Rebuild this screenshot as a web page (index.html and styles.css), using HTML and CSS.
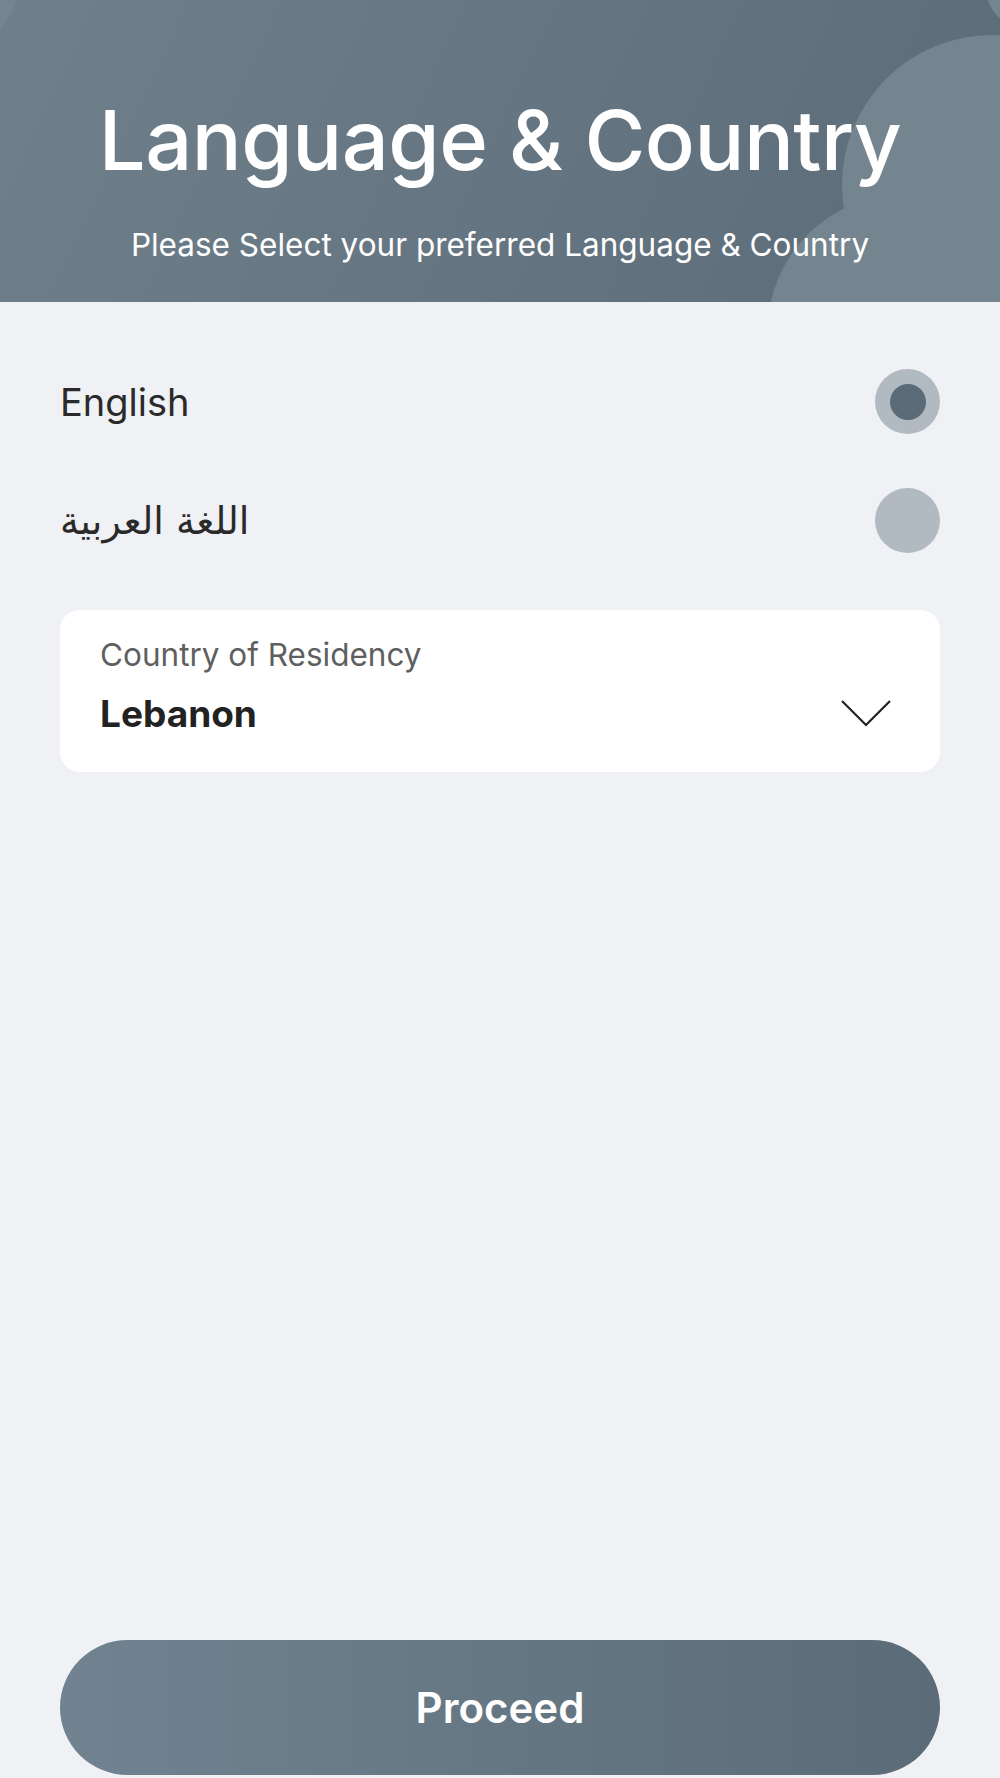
FILE: index.html
```html
<!DOCTYPE html>
<html lang="en">
<head>
  <meta charset="UTF-8">
  <title>Language &amp; Country</title>
  <link rel="stylesheet" href="styles.css">
</head>
<body>
  <div class="page">
    <div class="header">
      <span class="blob blob-a"></span>
      <span class="blob blob-b"></span>
      <span class="blob blob-c"></span>
      <span class="blob blob-d"></span>
      <h1>Language &amp; Country</h1>
      <p>Please Select your preferred Language &amp; Country</p>
    </div>

    <div class="content">
      <div class="option">
        <span class="label">English</span>
        <span class="radio checked"></span>
      </div>
      <div class="option">
        <span class="label arabic">اللغة العربية</span>
        <span class="radio"></span>
      </div>

      <div class="select-card">
        <div class="select-label">Country of Residency</div>
        <div class="select-row">
          <span class="select-value">Lebanon</span>
          <svg class="chevron" width="52" height="30" viewBox="0 0 52 30">
            <polyline points="2,3 26,27 50,3" fill="none" stroke="#222" stroke-width="2.2"/>
          </svg>
        </div>
      </div>
    </div>

    <!-- Bottom button -->
    <div class="footer">
      <button class="proceed">Proceed</button>
    </div>
  </div>
</body>
</html>
```

FILE: styles.css
```css
body {
  margin: 0;
  background-color: #eff1f5;
  font-family: Inter, "Open Sans", sans-serif;
  color: #222;
}

.page {
  display: flex;
  flex-direction: column;
  min-height: 100vh;
}

.header {
  position: relative;
  overflow: hidden;
  height: 302px;
  background: linear-gradient(115deg, #6f808b 0%, #5b6b78 100%);
  color: white;
  text-align: center;
}

.header h1 {
  position: relative;
  margin: 0;
  padding-top: 95px;
  font-size: 83px;
  font-weight: 500;
  line-height: 90px;
  letter-spacing: -0.5px;
}

.header p {
  position: relative;
  margin: 42px 0 0;
  font-size: 31.5px;
  line-height: 36px;
  font-weight: 400;
}

.blob {
  position: absolute;
  border-radius: 50%;
  background-color: #74858f;
}

.blob-a {
  left: 768px;
  top: 195px;
  width: 270px;
  height: 270px;
}

.blob-b {
  left: 842px;
  top: 35px;
  width: 300px;
  height: 300px;
}

.blob-c {
  left: 985px;
  top: -60px;
  width: 90px;
  height: 90px;
}

.blob-d {
  left: -150px;
  top: -110px;
  width: 170px;
  height: 170px;
}

.content {
  padding: 40px 60px 0;
}

.option {
  display: flex;
  justify-content: space-between;
  align-items: center;
  height: 119px;
}

.label {
  font-size: 38px;
  color: #2a2a2a;
}

.arabic {
  font-family: "DejaVu Sans", sans-serif;
  font-size: 38px;
}

.radio {
  width: 65px;
  height: 65px;
  border-radius: 50%;
  background-color: #b2bac1;
  display: flex;
  justify-content: center;
  align-items: center;
}

.radio.checked::after {
  content: "";
  width: 36px;
  height: 36px;
  border-radius: 50%;
  background-color: #5a6b77;
}

.select-card {
  margin-top: 30px;
  background: white;
  border-radius: 20px;
  padding: 28px 48px 39px 40px;
}

.select-label {
  font-size: 31.5px;
  line-height: 34px;
  color: #5f5f5f;
}

.select-row {
  display: flex;
  justify-content: space-between;
  align-items: center;
  margin-top: 21px;
  height: 40px;
}

.select-value {
  font-size: 37px;
  font-weight: 700;
  color: #222;
}

.footer {
  margin-top: auto;
  padding: 0 60px 3px;
}

.proceed {
  width: 100%;
  height: 135px;
  border: none;
  border-radius: 68px;
  background: linear-gradient(90deg, #718390 0%, #5b6b78 100%);
  color: white;
  font-family: Inter, "Open Sans", sans-serif;
  font-size: 42px;
  font-weight: 600;
  cursor: pointer;
}
```
